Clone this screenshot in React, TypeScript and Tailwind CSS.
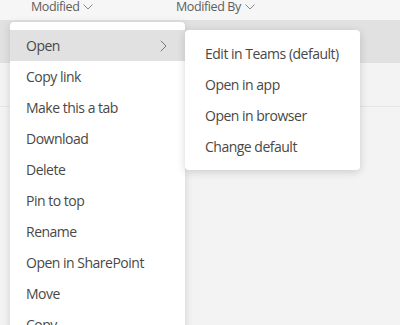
import React from "react";

const Down = () => (
  <svg width="10" height="6" viewBox="0 0 10 6" className="ml-[4px] mt-[1px]">
    <path d="M0.5 0.5 L5 5 L9.5 0.5" fill="none" stroke="#8a8886" strokeWidth="1" />
  </svg>
);

const Item = ({ label, active, chevron }: { label: string; active?: boolean; chevron?: boolean }) => (
  <div
    className={`flex h-[31px] items-center justify-between pl-[16px] pr-[18px] text-[14px] tracking-[-0.5px] text-[#4a4846] ${
      active ? "bg-[#e1e1e1]" : ""
    }`}
  >
    <span>{label}</span>
    {chevron && (
      <svg width="7" height="12" viewBox="0 0 7 12">
        <path d="M0.8 0.8 L6 6 L0.8 11.2" fill="none" stroke="#7a7876" strokeWidth="1" />
      </svg>
    )}
  </div>
);

export default function App() {
  const main = [
    "Copy link",
    "Make this a tab",
    "Download",
    "Delete",
    "Pin to top",
    "Rename",
    "Open in SharePoint",
    "Move",
    "Copy",
  ];
  const sub = ["Edit in Teams (default)", "Open in app", "Open in browser", "Change default"];
  return (
    <div
      className="relative h-[325px] w-[400px] overflow-hidden bg-[#f3f3f3]"
      style={{ fontFamily: '"Segoe UI", "Open Sans", sans-serif' }}
    >
      <div className="flex h-[20px] bg-[#f6f6f6] text-[12.5px] leading-[20px] tracking-[-0.4px] text-[#605e5c]">
        <div className="-mt-[7px] ml-[31px] flex w-[145px] items-center">
          <span>Modified</span>
          <Down />
        </div>
        <div className="-mt-[7px] flex items-center">
          <span>Modified By</span>
          <Down />
        </div>
      </div>
      <div className="h-[43px] bg-[#e1e1e1]" />
      <div className="h-[44px] border-b border-[#e6e6e6] bg-[#f3f3f3]" />

      <div className="absolute left-[10px] top-[22px] w-[175px] rounded-[4px] bg-white py-[8px] shadow-[0_2px_8px_rgba(0,0,0,0.14)]">
        <Item label="Open" active chevron />
        {main.map((m) => (
          <Item key={m} label={m} />
        ))}
      </div>

      <div className="absolute left-[185px] top-[30px] w-[175px] rounded-[4px] bg-white py-[8px] shadow-[0_2px_8px_rgba(0,0,0,0.16)]">
        {sub.map((s) => (
          <div key={s} className="flex h-[31px] items-center pl-[20px] text-[14px] tracking-[-0.5px] text-[#4a4846]">
            {s}
          </div>
        ))}
      </div>
    </div>
  );
}
